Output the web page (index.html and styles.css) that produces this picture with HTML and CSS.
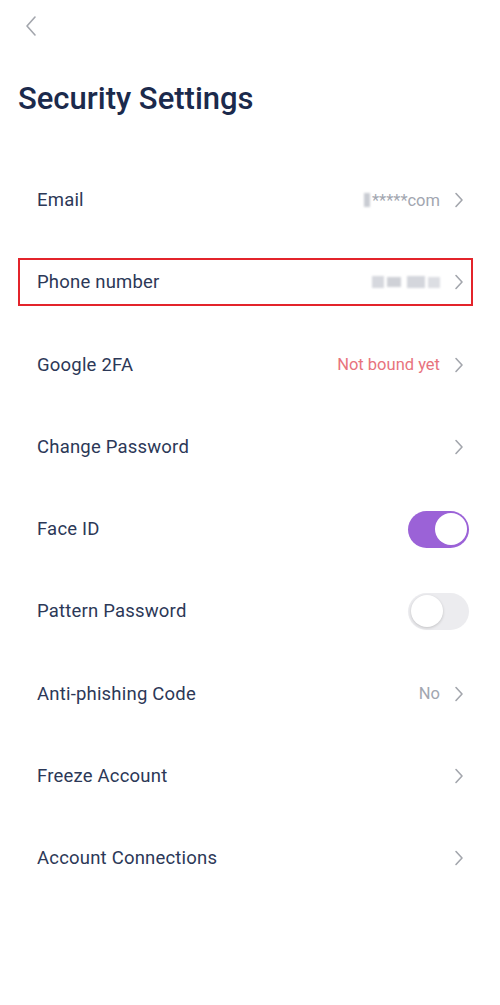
FILE: index.html
```html
<!DOCTYPE html>
<html>
<head>
<meta charset="utf-8">
<link rel="stylesheet" href="styles.css">
</head>
<body>
<div class="page">
  <div class="topbar">
    <svg class="back" width="14" height="22" viewBox="0 0 14 22"><path d="M11 2 L3 11 L11 20" fill="none" stroke="#a3a6ad" stroke-width="1.6" stroke-linecap="round" stroke-linejoin="round"/></svg>
  </div>
  <h1 class="title">Security Settings</h1>
  <ul class="list">
    <li class="row"><span class="label">Email</span><span class="right"><span class="val"><span class="blur b1"></span>*****com</span><svg class="chev" viewBox="0 0 10 16"><path d="M2 1.5 L8 8 L2 14.5" fill="none" stroke="#a3a6ad" stroke-width="1.6" stroke-linecap="round" stroke-linejoin="round"/></svg></span></li>
    <li class="row highlighted"><span class="label">Phone number</span><span class="right"><span class="val"><span class="blur b2"></span><span class="blur b3"></span><span class="blur b4"></span><span class="blur b5"></span></span><svg class="chev" viewBox="0 0 10 16"><path d="M2 1.5 L8 8 L2 14.5" fill="none" stroke="#a3a6ad" stroke-width="1.6" stroke-linecap="round" stroke-linejoin="round"/></svg></span></li>
    <li class="row"><span class="label">Google 2FA</span><span class="right"><span class="val warn">Not bound yet</span><svg class="chev" viewBox="0 0 10 16"><path d="M2 1.5 L8 8 L2 14.5" fill="none" stroke="#a3a6ad" stroke-width="1.6" stroke-linecap="round" stroke-linejoin="round"/></svg></span></li>
    <li class="row"><span class="label">Change Password</span><span class="right"><svg class="chev" viewBox="0 0 10 16"><path d="M2 1.5 L8 8 L2 14.5" fill="none" stroke="#a3a6ad" stroke-width="1.6" stroke-linecap="round" stroke-linejoin="round"/></svg></span></li>
    <li class="row"><span class="label">Face ID</span><span class="toggle on"><span class="knob"></span></span></li>
    <li class="row"><span class="label">Pattern Password</span><span class="toggle"><span class="knob"></span></span></li>
    <li class="row"><span class="label">Anti-phishing Code</span><span class="right"><span class="val">No</span><svg class="chev" viewBox="0 0 10 16"><path d="M2 1.5 L8 8 L2 14.5" fill="none" stroke="#a3a6ad" stroke-width="1.6" stroke-linecap="round" stroke-linejoin="round"/></svg></span></li>
    <li class="row"><span class="label">Freeze Account</span><span class="right"><svg class="chev" viewBox="0 0 10 16"><path d="M2 1.5 L8 8 L2 14.5" fill="none" stroke="#a3a6ad" stroke-width="1.6" stroke-linecap="round" stroke-linejoin="round"/></svg></span></li>
    <li class="row"><span class="label">Account Connections</span><span class="right"><svg class="chev" viewBox="0 0 10 16"><path d="M2 1.5 L8 8 L2 14.5" fill="none" stroke="#a3a6ad" stroke-width="1.6" stroke-linecap="round" stroke-linejoin="round"/></svg></span></li>
  </ul>
</div>
</body>
</html>
```
FILE: styles.css
```css
* { box-sizing: border-box; }
html, body { margin: 0; padding: 0; background: #ffffff; }
body { font-family: Roboto, "Noto Sans", sans-serif; color: #2a3654; }
.page { width: 500px; height: 1005px; overflow: hidden; }
.topbar { height: 54px; padding: 15px 0 0 24px; }
.back { display: block; }
.title {
  margin: 0;
  padding: 26px 0 0 18px;
  height: 104px;
  font-size: 31px;
  font-weight: 500;
  color: #1b2a4c;
  line-height: 38px;
}
.list { list-style: none; margin: 0; padding: 1px 0 0 0; }
.row {
  height: 82.25px;
  display: flex;
  align-items: center;
  justify-content: space-between;
  padding: 0 36px 0 37px;
  font-size: 18.5px;
  letter-spacing: 0.2px;
}
.label { color: #2c3857; }
.highlighted { position: relative; }
.highlighted::after {
  content: "";
  position: absolute;
  left: 18px; right: 27px; top: 17px; bottom: 18px;
  border: 2px solid #e3242b;
}
.right { display: flex; align-items: center; gap: 14px; }
.chev { width: 10px; height: 16px; display: block; }
.val { font-size: 16.5px; letter-spacing: 0; color: #a2a6b0; display: flex; align-items: center; }
.val.warn { color: #e8737d; }
.blur { display: inline-block; background: #c9ccd3; filter: blur(1.2px); }
.b1 { width: 6px; height: 14px; margin-right: 2px; }
.b2 { width: 12px; height: 12px; margin-right: 3px; background: #d6d8de; }
.b3 { width: 14px; height: 10px; margin-right: 6px; background: #cfd1d7; }
.b4 { width: 18px; height: 12px; margin-right: 3px; background: #d4d6dc; }
.b5 { width: 12px; height: 11px; background: #dcdee3; }
.toggle {
  width: 61px; height: 37px;
  border-radius: 19px;
  background: #ececef;
  position: relative;
  margin-right: -5px;
}
.toggle.on { background: #9b62d7; }
.knob {
  position: absolute;
  top: 2.5px; left: 2.5px;
  width: 32px; height: 32px;
  border-radius: 50%;
  background: #fff;
  box-shadow: 0 1px 3px rgba(0,0,0,0.18);
}
.toggle.on .knob { left: auto; right: 2.5px; box-shadow: none; }
```
